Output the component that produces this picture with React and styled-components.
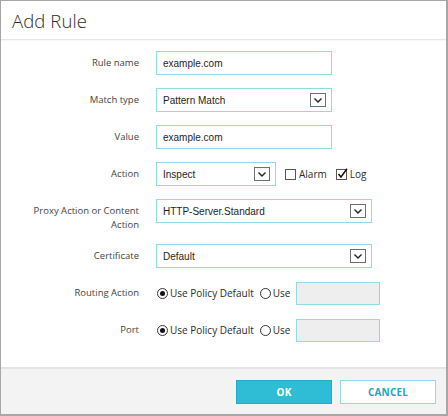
import React from "react";
import styled, { createGlobalStyle } from "styled-components";

const GlobalStyle = createGlobalStyle`
  html, body { margin: 0; padding: 0; background: #ffffff; }
  * { box-sizing: border-box; }
`;

const Dialog = styled.div`
  width: 448px;
  height: 416px;
  display: flex;
  flex-direction: column;
  background: #ffffff;
  border: 1px solid #a7a7a7;
  border-right-width: 2px;
  border-bottom-width: 2px;
  font-family: "Open Sans", "Noto Sans", sans-serif;
`;

const Header = styled.div`
  height: 39px;
  display: flex;
  align-items: center;
  padding-left: 11px;
  border-bottom: 1px solid #e6e6e6;
  box-shadow: 0 1px 1px rgba(0, 0, 0, 0.03);
`;

const Title = styled.h1`
  margin: 0;
  font-family: "Open Sans", sans-serif;
  font-weight: 300;
  font-size: 18.5px;
  color: #2e2e2e;
  letter-spacing: 0.1px;
`;

const Body = styled.div`
  flex: 1;
  display: flex;
  flex-direction: column;
  gap: 13px;
  padding-top: 11px;
`;

const Row = styled.div`
  display: flex;
  align-items: flex-start;
  min-height: 24px;
`;

const Label = styled.div`
  width: 138px;
  margin-right: 17px;
  padding-top: 5px;
  text-align: right;
  font-size: 9.5px;
  line-height: 13.5px;
  color: #444444;
`;

const Field = styled.div`
  width: ${(p) => p.$w}px;
  height: ${(p) => p.$h || 24}px;
  border: 1px solid #8edcea;
  background: ${(p) => (p.$disabled ? "#eeeeee" : "#ffffff")};
  display: flex;
  align-items: center;
  padding: 0 5px 0 6px;
  font-family: "Liberation Sans", Arial, sans-serif;
  font-size: 10px;
  color: #1e1e1e;
`;

const FieldText = styled.span`
  flex: 1;
  white-space: nowrap;
`;

const ArrowBox = styled.span`
  width: 16px;
  height: 14px;
  border: 1px solid #6f6f6f;
  background: #ffffff;
  display: flex;
  align-items: center;
  justify-content: center;
`;

const Inline = styled.div`
  display: flex;
  align-items: center;
  height: 24px;
  margin-left: ${(p) => p.$ml || 0}px;
`;

const Option = styled.label`
  display: flex;
  align-items: center;
  gap: 2px;
  font-size: 10px;
  color: #2a2a2a;
  margin-right: ${(p) => p.$mr || 0}px;
`;

const Radio = styled.span`
  width: 11px;
  height: 11px;
  border-radius: 50%;
  border: 1px solid #333333;
  background: #ffffff;
  display: flex;
  align-items: center;
  justify-content: center;
  margin-left: ${(p) => p.$ml || 0}px;
  margin-right: 2px;
  &::after {
    content: "";
    width: 5px;
    height: 5px;
    border-radius: 50%;
    background: ${(p) => (p.$checked ? "#111111" : "transparent")};
  }
`;

const Footer = styled.div`
  height: 47px;
  border-top: 2px solid #e4e4e4;
  background: #f3f3f3;
  display: flex;
  align-items: center;
  justify-content: flex-end;
  gap: 8px;
  padding-right: 10px;
`;

const Button = styled.button`
  width: 96px;
  height: 24px;
  padding: 0;
  font-family: "Open Sans", sans-serif;
  font-weight: 700;
  font-size: 10px;
  letter-spacing: 0.2px;
  cursor: pointer;
  border: 1px solid ${(p) => (p.$primary ? "#22abc4" : "#8edcea")};
  background: ${(p) => (p.$primary ? "#2ebdd4" : "#ffffff")};
  color: ${(p) => (p.$primary ? "#ffffff" : "#20a7c2")};
`;

const Chevron = () => (
  <svg width="10" height="7" viewBox="0 0 10 7">
    <path d="M1.5 1.5 L5 5 L8.5 1.5" fill="none" stroke="#222" strokeWidth="1.4" />
  </svg>
);

const Checkbox = ({ checked }) => (
  <svg width="12" height="12" viewBox="0 0 12 12">
    <rect x="0.5" y="1.5" width="10" height="10" fill="#fff" stroke="#555" />
    {checked && (
      <path d="M2.5 6 L5 9 L11 0.8" fill="none" stroke="#111" strokeWidth="1.5" />
    )}
  </svg>
);

const Select = ({ w, value }) => (
  <Field $w={w}>
    <FieldText>{value}</FieldText>
    <ArrowBox>
      <Chevron />
    </ArrowBox>
  </Field>
);

const RadioGroup = () => (
  <Inline>
    <Radio $checked $ml={1} />
    <Option $mr={6}>Use Policy Default</Option>
    <Radio />
    <Option $mr={6}>Use</Option>
    <Field $w={84} $h={23} $disabled />
  </Inline>
);

export default function App() {
  return (
    <>
      <GlobalStyle />
      <Dialog>
        <Header>
          <Title>Add Rule</Title>
        </Header>
        <Body>
          <Row>
            <Label>Rule name</Label>
            <Field $w={176}>
              <FieldText>example.com</FieldText>
            </Field>
          </Row>
          <Row>
            <Label>Match type</Label>
            <Select w={176} value="Pattern Match" />
          </Row>
          <Row>
            <Label>Value</Label>
            <Field $w={176}>
              <FieldText>example.com</FieldText>
            </Field>
          </Row>
          <Row>
            <Label>Action</Label>
            <Select w={120} value="Inspect" />
            <Inline $ml={9}>
              <Option $mr={9}>
                <Checkbox />
                Alarm
              </Option>
              <Option>
                <Checkbox checked />
                Log
              </Option>
            </Inline>
          </Row>
          <Row>
            <Label>
              Proxy Action or Content
              <br />
              Action
            </Label>
            <Select w={216} value="HTTP-Server.Standard" />
          </Row>
          <Row>
            <Label>Certificate</Label>
            <Select w={216} value="Default" />
          </Row>
          <Row>
            <Label>Routing Action</Label>
            <RadioGroup />
          </Row>
          <Row>
            <Label>Port</Label>
            <RadioGroup />
          </Row>
        </Body>
        <Footer>
          <Button $primary>OK</Button>
          <Button>CANCEL</Button>
        </Footer>
      </Dialog>
    </>
  );
}
